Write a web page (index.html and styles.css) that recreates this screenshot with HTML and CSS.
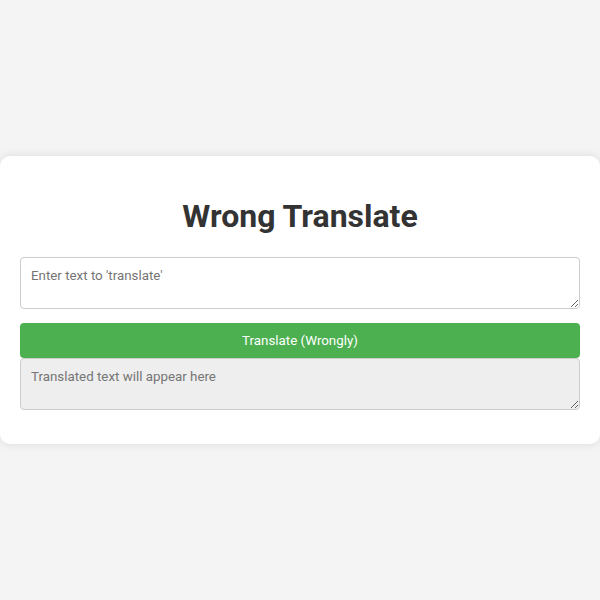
FILE: index.html
```html
<!DOCTYPE html>
<html>
<head>
<meta charset="utf-8">
<link rel="stylesheet" href="styles.css">
</head>
<body>
<div class="card">
  <h1 class="title">Wrong Translate</h1>
  <textarea class="field" placeholder="Enter text to 'translate'"></textarea>
  <button class="btn">Translate (Wrongly)</button>
  <textarea class="field output" placeholder="Translated text will appear here" readonly></textarea>
</div>
</body>
</html>
```
FILE: styles.css
```css
html, body {
  margin: 0;
  padding: 0;
}
body {
  background: #f4f4f4;
  font-family: Roboto, "Liberation Sans", sans-serif;
  height: 100vh;
  display: flex;
  align-items: center;
  justify-content: center;
}
.card {
  width: 600px;
  box-sizing: border-box;
  background: #fff;
  border-radius: 10px;
  box-shadow: 0 0 10px rgba(0,0,0,0.1);
  padding: 20px 20px 34px;
  display: flex;
  flex-direction: column;
}
.title {
  font-size: 32px;
  font-weight: bold;
  color: #333;
  text-align: center;
  margin: 22px 0 22px;
  line-height: 37px;
}
.field {
  display: block;
  height: 52px;
  box-sizing: border-box;
  padding: 10px;
  border: 1px solid #ccc;
  border-radius: 4px;
  font-family: Roboto, "Liberation Sans", sans-serif;
  font-size: 13.333px;
  color: #333;
  background: #fff;
  margin: 0;
}
.field::placeholder {
  color: #757575;
}
.btn {
  margin: 14px 0 0;
  height: 35px;
  background: #4caf50;
  color: #fff;
  border: none;
  border-radius: 4px;
  font-family: Roboto, "Liberation Sans", sans-serif;
  font-size: 13.333px;
}
.output {
  background: #eee;
}
```
